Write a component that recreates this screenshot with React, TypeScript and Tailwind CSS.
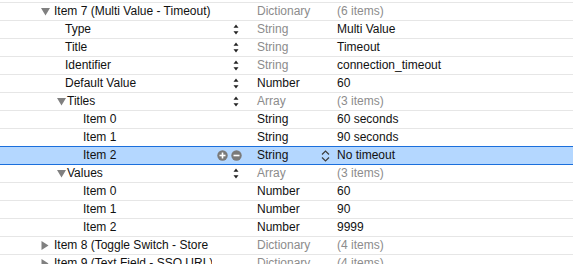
import React from 'react';

type Row = {
    key: string;
    pad: string;
    disclosure?: 'down' | 'right';
    stepper?: boolean;
    type: string;
    typeGrey?: boolean;
    value: string;
    valueGrey?: boolean;
    selected?: boolean;
};

const rows: Row[] = [
    { key: 'Item 7 (Multi Value - Timeout)', pad: 'pl-[41px]', disclosure: 'down', type: 'Dictionary', typeGrey: true, value: '(6 items)', valueGrey: true },
    { key: 'Type', pad: 'pl-[65px]', stepper: true, type: 'String', typeGrey: true, value: 'Multi Value' },
    { key: 'Title', pad: 'pl-[65px]', stepper: true, type: 'String', typeGrey: true, value: 'Timeout' },
    { key: 'Identifier', pad: 'pl-[65px]', stepper: true, type: 'String', typeGrey: true, value: 'connection_timeout' },
    { key: 'Default Value', pad: 'pl-[65px]', stepper: true, type: 'Number', value: '60' },
    { key: 'Titles', pad: 'pl-[57px]', disclosure: 'down', stepper: true, type: 'Array', typeGrey: true, value: '(3 items)', valueGrey: true },
    { key: 'Item 0', pad: 'pl-[83px]', type: 'String', value: '60 seconds' },
    { key: 'Item 1', pad: 'pl-[83px]', type: 'String', value: '90 seconds' },
    { key: 'Item 2', pad: 'pl-[83px]', type: 'String', value: 'No timeout', selected: true },
    { key: 'Values', pad: 'pl-[57px]', disclosure: 'down', stepper: true, type: 'Array', typeGrey: true, value: '(3 items)', valueGrey: true },
    { key: 'Item 0', pad: 'pl-[83px]', type: 'Number', value: '60' },
    { key: 'Item 1', pad: 'pl-[83px]', type: 'Number', value: '90' },
    { key: 'Item 2', pad: 'pl-[83px]', type: 'Number', value: '9999' },
    { key: 'Item 8 (Toggle Switch - Store', pad: 'pl-[41px]', disclosure: 'right', type: 'Dictionary', typeGrey: true, value: '(4 items)', valueGrey: true },
    { key: 'Item 9 (Text Field - SSO URL)', pad: 'pl-[41px]', disclosure: 'right', type: 'Dictionary', typeGrey: true, value: '(4 items)', valueGrey: true },
];

// grey disclosure triangle, open or closed
const Disclosure = ({ dir }: { dir: 'down' | 'right' }) => (
    <svg width="13" height="11" viewBox="0 0 13 11" className="shrink-0">
        {dir === 'down' ? (
            <polygon points="0,2 9,2 4.5,9.5" fill="#808080" />
        ) : (
            <polygon points="0.5,1 7.5,5.5 0.5,10" fill="#808080" />
        )}
    </svg>
);

const Stepper = () => (
    <svg width="6" height="11" viewBox="0 0 6 11">
        <polygon points="3,0.5 5.5,3.8 0.5,3.8" fill="#222" />
        <polygon points="0.5,7.2 5.5,7.2 3,10.5" fill="#222" />
    </svg>
);

const RoundButton = ({ minus }: { minus?: boolean }) => (
    <svg width="11" height="11" viewBox="0 0 11 11">
        <circle cx="5.5" cy="5.5" r="5.2" fill="#7a7a7a" />
        <rect x="2.5" y="4.7" width="6" height="1.6" fill="#fff" />
        {!minus && <rect x="4.7" y="2.5" width="1.6" height="6" fill="#fff" />}
    </svg>
);

const Chevrons = () => (
    <svg width="9" height="12" viewBox="0 0 9 12">
        <polyline points="1,4.5 4.5,1 8,4.5" fill="none" stroke="#3c3c3c" strokeWidth="1.2" />
        <polyline points="1,7.5 4.5,11 8,7.5" fill="none" stroke="#3c3c3c" strokeWidth="1.2" />
    </svg>
);

const PlistRow = ({ row }: { row: Row }) => {
    const rowClass = row.selected
        ? '-mt-px h-[19px] border-t border-b border-[#1b6fdc] bg-[#b4d7ff]'
        : 'h-[18px] border-b border-[#e6e6e6] bg-white';

    return (
        <div className={`flex items-center text-[12px] leading-[17px] ${rowClass}`}>
            <div className={`w-[212px] shrink-0 flex items-center whitespace-nowrap overflow-hidden text-[#111] ${row.pad}`}>
                {row.disclosure && <Disclosure dir={row.disclosure} />}
                <span className={row.disclosure === 'down' && row.pad === 'pl-[57px]' ? '-ml-[3px]' : ''}>{row.key}</span>
            </div>
            <div className="w-[45px] shrink-0 flex items-center h-full">
                {row.stepper && (
                    <div className="ml-[21px] flex items-center">
                        <Stepper />
                    </div>
                )}
                {row.selected && (
                    <div className="ml-[5px] flex items-center gap-[3px]">
                        <RoundButton />
                        <RoundButton minus />
                    </div>
                )}
            </div>
            <div className={`w-[80px] shrink-0 flex items-center justify-between pr-[7px] ${row.typeGrey ? 'text-[#8c8c8c]' : 'text-[#111]'}`}>
                <span>{row.type}</span>
                {row.selected && <Chevrons />}
            </div>
            <div className={`flex-1 whitespace-nowrap ${row.valueGrey ? 'text-[#8c8c8c]' : 'text-[#111]'}`}>
                {row.value}
            </div>
        </div>
    );
};

export default function App() {
    return (
        <div className="w-[573px] h-[264px] overflow-hidden bg-white" style={{ fontFamily: '"Liberation Sans", Arial, sans-serif' }}>
            <div className="h-[3px] border-b border-[#e6e6e6]" />
            {rows.map((row, i) => (
                <PlistRow key={i} row={row} />
            ))}
        </div>
    );
}
